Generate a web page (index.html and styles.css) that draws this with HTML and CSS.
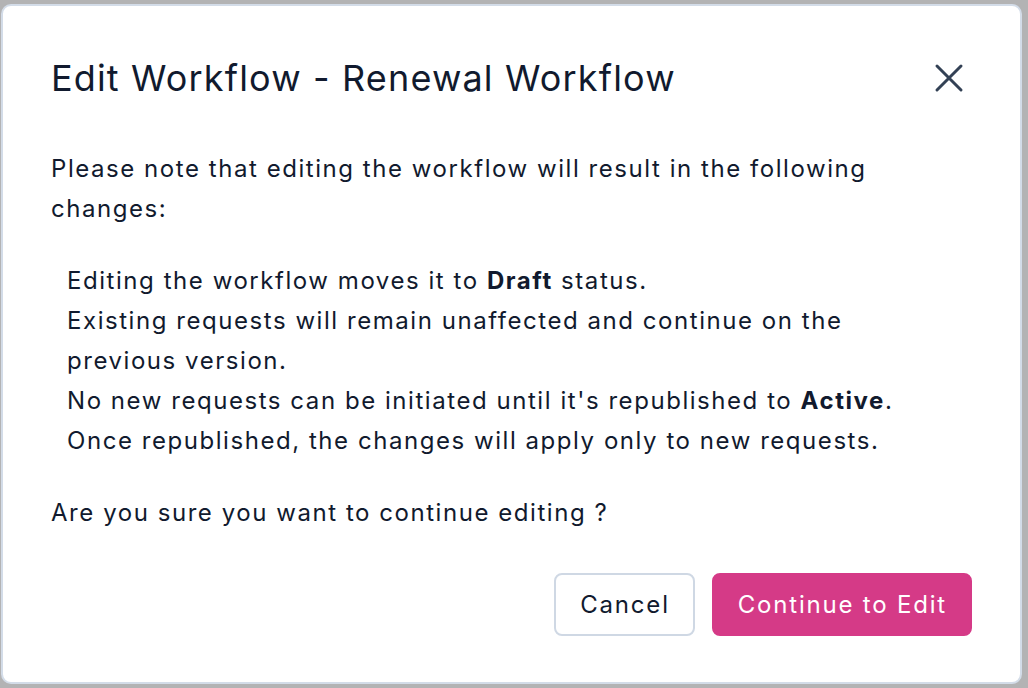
FILE: index.html
```html
<!DOCTYPE html>
<html lang="en">
<head>
<meta charset="utf-8">
<title>Edit Workflow</title>
<link rel="stylesheet" href="styles.css">
</head>
<body>
<div class="modal">
  <div class="modal-header">
    <h1 class="modal-title">Edit Workflow - Renewal Workflow</h1>
    <button class="close-btn" aria-label="Close">
      <svg width="32" height="32" viewBox="0 0 32 32" fill="none" stroke="#334155" stroke-width="3" stroke-linecap="round">
        <path d="M4 4 L28 28 M28 4 L4 28"/>
      </svg>
    </button>
  </div>
  <div class="modal-body">
    <p class="intro">Please note that editing the workflow will result in the following changes:</p>
    <ul class="changes">
      <li>Editing the workflow moves it to <strong>Draft</strong> status.</li>
      <li>Existing requests will remain unaffected and continue on the previous version.</li>
      <li>No new requests can be initiated until it's republished to <strong>Active</strong>.</li>
      <li>Once republished, the changes will apply only to new requests.</li>
    </ul>
    <p class="question">Are you sure you want to continue editing ?</p>
  </div>
  <div class="modal-footer">
    <button class="btn btn-secondary">Cancel</button>
    <button class="btn btn-primary">Continue to Edit</button>
  </div>
</div>
</body>
</html>
```

FILE: styles.css
```css
html, body {
  margin: 0;
  padding: 0;
  height: 100%;
}
body {
  background: #b3b3b4;
  font-family: Inter, "Noto Sans", "Liberation Sans", sans-serif;
  color: #111a2e;
  padding: 4px 6px 4px 1px;
  box-sizing: border-box;
}
.modal {
  box-sizing: border-box;
  width: 1021px;
  height: 680px;
  background: #ffffff;
  border: 2px solid #d3dce8;
  border-radius: 10px;
  padding: 48px 48px 46px 48px;
  display: flex;
  flex-direction: column;
}
.modal-header {
  display: flex;
  align-items: center;
  justify-content: space-between;
  height: 48px;
}
.modal-title {
  margin: 0;
  font-size: 36px;
  font-weight: 400;
  line-height: 48px;
  letter-spacing: 1.15px;
  color: #111a2e;
}
.close-btn {
  border: none;
  background: none;
  padding: 0;
  margin-right: 7px;
  width: 32px;
  height: 32px;
  display: flex;
  align-items: center;
  justify-content: center;
  cursor: pointer;
}
.modal-body {
  margin-top: 47px;
  font-size: 24px;
  line-height: 40px;
  letter-spacing: 1.55px;
}
.intro {
  margin: 0;
}
.changes {
  list-style: none;
  margin: 32px 0 32px 0;
  padding: 0 40px 0 16px;
}
.changes strong {
  font-weight: 700;
}
.question {
  margin: 0;
}
.modal-footer {
  margin-top: auto;
  display: flex;
  justify-content: flex-end;
  gap: 17px;
}
.btn {
  font-family: Inter, "Noto Sans", "Liberation Sans", sans-serif;
  font-size: 24px;
  letter-spacing: 1.8px;
  height: 63px;
  border-radius: 8px;
  padding: 0 23px 0 24px;
  cursor: pointer;
}
.btn-secondary {
  background: #ffffff;
  color: #111a2e;
  border: 2px solid #cfd8e4;
}
.btn-primary {
  background: #d53a87;
  color: #ffffff;
  border: 2px solid #d53a87;
}
```
